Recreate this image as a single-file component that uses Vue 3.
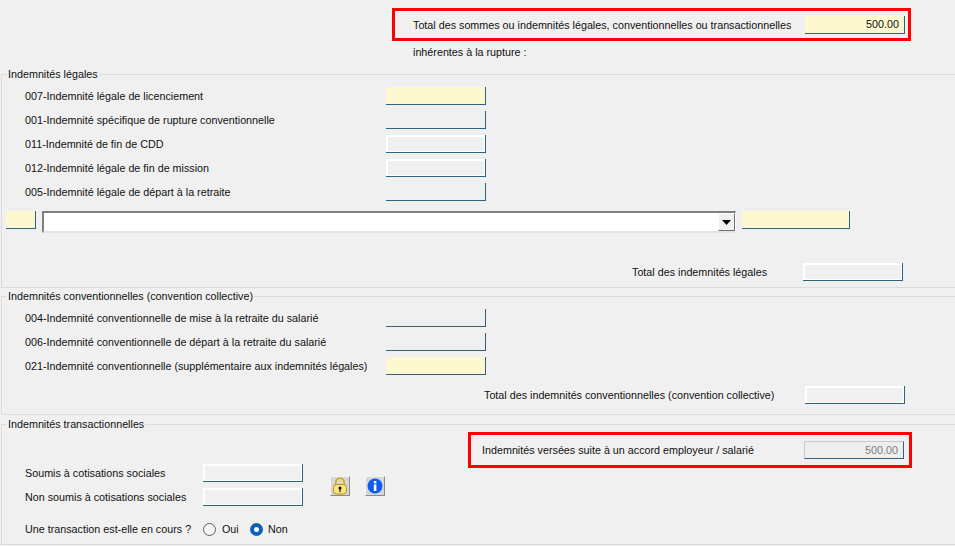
<script setup>
const legalRows = [
  { label: '007-Indemnité légale de licenciement', kind: 'yellow' },
  { label: '001-Indemnité spécifique de rupture conventionnelle', kind: 'plain' },
  { label: '011-Indemnité de fin de CDD', kind: 'white' },
  { label: '012-Indemnité légale de fin de mission', kind: 'white' },
  { label: '005-Indemnité légale de départ à la retraite', kind: 'plain' }
]
const convRows = [
  { label: '004-Indemnité conventionnelle de mise à la retraite du salarié', kind: 'plain' },
  { label: '006-Indemnité conventionnelle de départ à la retraite du salarié', kind: 'plain' },
  { label: '021-Indemnité conventionnelle (supplémentaire aux indemnités légales)', kind: 'yellow' }
]
</script>

<template>
  <div class="page">
    <div class="top">
      <div class="alert alert-top">
        <span class="label-top">Total des sommes ou indemnités légales, conventionnelles ou transactionnelles</span>
        <div class="field yellow value">500.00</div>
      </div>
      <div class="sub">inhérentes à la rupture :</div>
    </div>

    <fieldset class="group group-legal">
      <legend>Indemnités légales</legend>
      <div class="rows">
        <div v-for="r in legalRows" :key="r.label" class="row">
          <span class="row-label">{{ r.label }}</span>
          <div class="field" :class="r.kind"></div>
        </div>
      </div>
      <div class="combo-row">
        <div class="field yellow code"></div>
        <div class="combo">
          <div class="combo-btn">
            <svg width="9" height="5" viewBox="0 0 9 5"><path d="M0 0h9L4.5 5z" fill="#000" /></svg>
          </div>
        </div>
        <div class="field yellow amount"></div>
      </div>
      <div class="total-row total-legal">
        <span>Total des indemnités légales</span>
        <div class="field white"></div>
      </div>
    </fieldset>

    <fieldset class="group group-conv">
      <legend>Indemnités conventionnelles (convention collective)</legend>
      <div class="rows">
        <div v-for="r in convRows" :key="r.label" class="row">
          <span class="row-label">{{ r.label }}</span>
          <div class="field" :class="r.kind"></div>
        </div>
      </div>
      <div class="total-row total-conv">
        <span>Total des indemnités conventionnelles (convention collective)</span>
        <div class="field white"></div>
      </div>
    </fieldset>

    <fieldset class="group group-trans">
      <legend>Indemnités transactionnelles</legend>
      <div class="trans">
        <div class="trans-left">
          <div class="trans-fields">
            <div class="trans-rows">
              <div class="trans-row">
                <span class="trans-label">Soumis à cotisations sociales</span>
                <div class="field white"></div>
              </div>
              <div class="trans-row">
                <span class="trans-label">Non soumis à cotisations sociales</span>
                <div class="field white"></div>
              </div>
            </div>
            <div class="tools">
              <div class="tool">
                <svg width="16" height="18" viewBox="0 0 16 18">
                  <path d="M4 8V5.5a4 4 0 0 1 8 0V8" fill="none" stroke="#c9a227" stroke-width="2" />
                  <path d="M5 8V5.5a3 3 0 0 1 6 0V8" fill="none" stroke="#f7e58a" stroke-width="1" />
                  <rect x="1.5" y="7.5" width="13" height="9.5" rx="3" fill="#fbe27a" stroke="#b8921f" />
                  <circle cx="8" cy="11" r="1.5" fill="#111" />
                  <rect x="7.4" y="11" width="1.2" height="4" fill="#111" />
                </svg>
              </div>
              <div class="tool">
                <svg width="16" height="16" viewBox="0 0 16 16">
                  <circle cx="8" cy="8" r="7.5" fill="#0f5bf0" />
                  <rect x="6.8" y="3" width="2.6" height="2.4" fill="#fff" />
                  <rect x="6.8" y="6.5" width="2.6" height="6.5" fill="#fff" />
                </svg>
              </div>
            </div>
          </div>
          <div class="radio-row">
            <span class="trans-label">Une transaction est-elle en cours ?</span>
            <span class="radio"></span>
            <span class="radio-text oui">Oui</span>
            <span class="radio on"></span>
            <span class="radio-text">Non</span>
          </div>
        </div>
        <div class="alert alert-trans">
          <span>Indemnités versées suite à un accord employeur / salarié</span>
          <div class="field muted value">500.00</div>
        </div>
      </div>
    </fieldset>
  </div>
</template>

<style scoped>
.page {
  width: 955px;
  height: 546px;
  overflow: hidden;
  background: #f0f0f0;
  color: #111;
  font: 10.75px/14px "Liberation Sans", Arial, sans-serif;
  display: flex;
  flex-direction: column;
}
.top {
  height: 67px;
  flex: none;
  padding: 8px 0 0 392px;
  box-sizing: border-box;
}
.alert {
  border: 3px solid #f00;
  box-sizing: border-box;
  display: flex;
  align-items: center;
  justify-content: space-between;
}
.alert-top {
  width: 519px;
  height: 33px;
  padding: 0 3px 0 18px;
}
.alert-top .field {
  margin-top: 1px;
}
.sub {
  margin: 4px 0 0 21px;
}
.group {
  margin: 0 0 0 1px;
  padding: 0;
  border: 1px solid #dcdcdc;
  border-right: none;
  box-sizing: border-box;
  flex: none;
  min-width: 0;
}
.group legend {
  margin-left: 5px;
  padding: 0 1px;
  line-height: 14px;
  height: 14px;
}
.group-legal {
  height: 221px;
}
.group-conv {
  height: 126px;
  margin-top: 1px;
}
.group-trans {
  height: 128px;
  margin-top: 2px;
}
.rows {
  padding: 6px 0 0 23px;
  display: flex;
  flex-direction: column;
  gap: 6px;
}
.row {
  display: flex;
  align-items: center;
  height: 18px;
}
.row-label {
  width: 361px;
  flex: none;
}
.field {
  width: 100px;
  height: 18px;
  box-sizing: border-box;
  border-right: 1px solid #2f637c;
  border-bottom: 1px solid #2f637c;
  flex: none;
}
.yellow {
  background: #fdf8d0;
}
.white {
  box-shadow: inset 2px 2px 0 #fff, inset -1px -1px 0 #fff;
}
.muted {
  border-top: 1px solid #c8c8c8;
  border-left: 1px solid #c8c8c8;
  background: #eeeeee;
  color: #7d7d7d;
}
.value {
  text-align: right;
  padding-right: 5px;
  line-height: 16px;
}
.combo-row {
  display: flex;
  align-items: flex-start;
  margin-top: 10px;
  padding-left: 4px;
}
.code {
  width: 30px;
}
.combo {
  width: 694px;
  height: 22px;
  margin-left: 6px;
  box-sizing: border-box;
  background: #fff;
  border-top: 2px solid #808080;
  border-left: 2px solid #808080;
  border-right: 1px solid #fff;
  border-bottom: 2px solid #e4e4e4;
  display: flex;
  justify-content: flex-end;
}
.combo-btn {
  width: 17px;
  height: 18px;
  box-sizing: border-box;
  background: #f0f0f0;
  border: 1px solid;
  border-color: #fff #707070 #707070 #fff;
  display: flex;
  align-items: center;
  justify-content: center;
}
.amount {
  width: 108px;
  margin-left: 6px;
}
.total-row {
  display: flex;
  align-items: center;
  justify-content: space-between;
  height: 18px;
  box-sizing: border-box;
}
.total-legal {
  margin-top: 30px;
  padding-left: 630px;
  width: 901px;
}
.total-conv {
  margin-top: 11px;
  padding-left: 482px;
  width: 903px;
}
.trans {
  display: flex;
  align-items: flex-start;
}
.trans-left {
  width: 466px;
  flex: none;
  padding: 33px 0 0 23px;
  box-sizing: border-box;
}
.trans-fields {
  display: flex;
  align-items: flex-start;
}
.trans-rows {
  display: flex;
  flex-direction: column;
  gap: 6px;
}
.trans-row {
  display: flex;
  align-items: center;
  height: 18px;
}
.trans-label {
  width: 178px;
  flex: none;
}
.tools {
  display: flex;
  gap: 15px;
  margin: 12px 0 0 27px;
}
.tool {
  width: 20px;
  height: 20px;
  box-sizing: border-box;
  background: #d6d6d6;
  border: 1px solid;
  border-color: #f4f4f4 #8a8a8a #8a8a8a #f4f4f4;
  display: flex;
  align-items: center;
  justify-content: center;
}
.radio-row {
  display: flex;
  align-items: center;
  height: 18px;
  margin-top: 14px;
}
.radio {
  width: 13px;
  height: 13px;
  box-sizing: border-box;
  border: 1px solid #5f5f5f;
  border-radius: 50%;
  background: #f4f4f4;
  flex: none;
}
.radio.on {
  border: 4px solid #0a62b8;
  background: #fff;
  margin-left: 11px;
}
.radio-text {
  margin-left: 5px;
}
.radio-text.oui {
  margin-left: 6px;
  width: 17px;
}
.alert-trans {
  width: 444px;
  height: 36px;
  margin-top: 1px;
  padding: 0 5px 0 11px;
}
</style>

<style>
html, body {
  margin: 0;
  background: #f0f0f0;
}
</style>
